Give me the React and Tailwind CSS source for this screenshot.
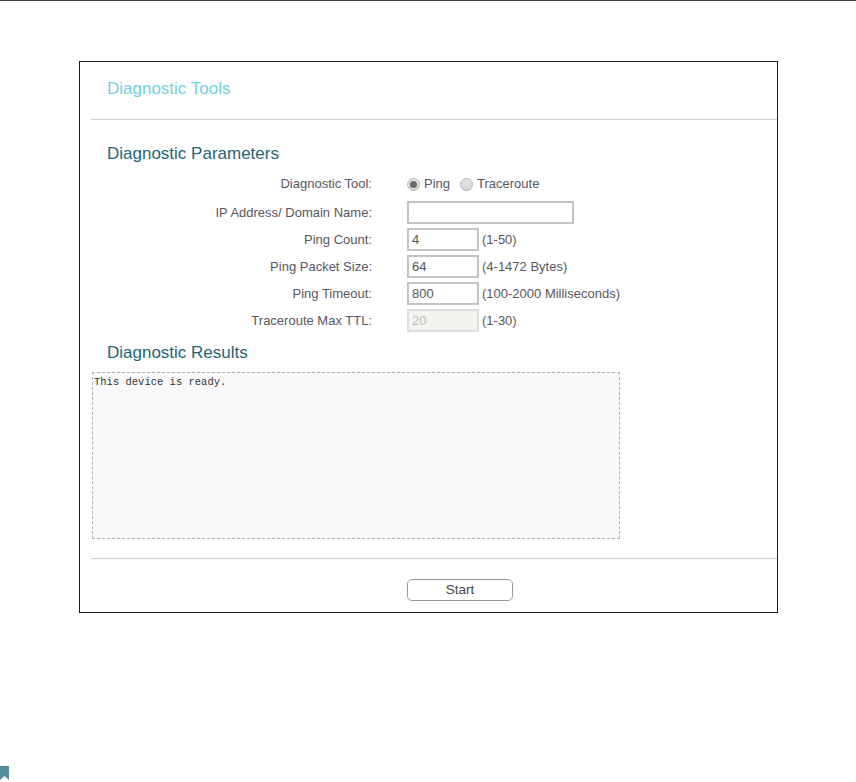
import React from 'react';

const labelCls = 'w-[282px] pr-[1px] text-right shrink-0 text-[13px] text-[#5a5560]';
const inputCls = 'h-[23px] border-2 pl-[3px] text-[13px] outline-none';

const Row = ({ label, className, children }) => (
  <div className={`flex items-center ${className}`}>
    <div className={labelCls}>{label}</div>
    <div className="ml-[34px] flex items-center">{children}</div>
  </div>
);

const NumRow = ({ label, value, hint, disabled, className }) => (
  <Row label={label} className={className}>
    <input
      readOnly
      value={value}
      disabled={disabled}
      className={`${inputCls} w-[72px] ${disabled ? 'bg-[#f2f2ef] text-[#bdbdbd] border-[#dedede]' : 'bg-white text-[#555] border-[#c4c4c4]'}`}
    />
    <span className="ml-[3px] text-[13px] text-[#5a5560]">{hint}</span>
  </Row>
);

const Radio = ({ checked }) => (
  <span className="flex h-[13px] w-[13px] items-center justify-center rounded-full border border-[#b4b4b4] bg-gradient-to-b from-[#e6e6e6] to-[#d4d4d4]">
    {checked && <span className="h-[7px] w-[7px] rounded-full bg-[#6a6a6a]" />}
  </span>
);

export default function App() {
  return (
    <div className="h-[782px] w-[856px] overflow-hidden bg-white font-['Liberation_Sans',Arial,sans-serif]">
      <div className="h-[1px] bg-[#3c3c3c]" />

      {/* Frame */}
      <div className="ml-[79px] mt-[60px] h-[552px] w-[699px] border border-[#1a1a1a] pl-[11px]">
        <h1 className="ml-[16px] mt-[15px] h-[24px] text-[17px] leading-[24px] text-[#6fd0e0]">Diagnostic Tools</h1>
        <div className="mt-[18px] h-[1px] bg-[#cfcfcf]" />

        <h2 className="ml-[16px] mt-[23px] h-[22px] text-[17px] leading-[22px] text-[#1f6475]">Diagnostic Parameters</h2>

        <Row label="Diagnostic Tool:" className="mt-[9px] h-[20px]">
          <Radio checked />
          <span className="ml-[4px] text-[13px] text-[#5a5560]">Ping</span>
          <span className="ml-[10px]"><Radio /></span>
          <span className="ml-[4px] text-[13px] text-[#5a5560]">Traceroute</span>
        </Row>
        <Row label="IP Address/ Domain Name:" className="mt-[7px] h-[23px]">
          <input readOnly className={`${inputCls} w-[167px] bg-white border-[#c4c4c4]`} />
        </Row>
        <NumRow label="Ping Count:" value="4" hint="(1-50)" className="mt-[4px] h-[23px]" />
        <NumRow label="Ping Packet Size:" value="64" hint="(4-1472 Bytes)" className="mt-[4px] h-[23px]" />
        <NumRow label="Ping Timeout:" value="800" hint="(100-2000 Milliseconds)" className="mt-[4px] h-[23px]" />
        <NumRow label="Traceroute Max TTL:" value="20" hint="(1-30)" disabled className="mt-[4px] h-[23px]" />

        <h2 className="ml-[16px] mt-[10px] h-[22px] text-[17px] leading-[22px] text-[#1f6475]">Diagnostic Results</h2>

        <div className="ml-[1px] mt-[8px] h-[167px] w-[528px] border border-dashed border-[#b0b0b0] bg-[#f9f9f9] pl-[1px] pt-[3px]">
          <p className="font-['Liberation_Mono',monospace] text-[10.5px] leading-[13px] text-[#333]">This device is ready.</p>
        </div>

        <div className="mt-[19px] h-[1px] bg-[#cfcfcf]" />

        <div className="mt-[18px] ml-[316px]">
          <button className="h-[22px] w-[106px] rounded-[5px] border border-[#9a9a9a] bg-white text-[13.5px] leading-[18px] text-[#444]">Start</button>
        </div>
      </div>

      {/* Bookmark mark, cut by the page edge */}
      <div className="mt-[153px] h-[16px] w-[9px]">
        <svg width="9" height="16" viewBox="0 0 9 16">
          <path d="M0 0H9V14L4.5 10L0 14Z" fill="#4f8f9c" />
        </svg>
      </div>
    </div>
  );
}
